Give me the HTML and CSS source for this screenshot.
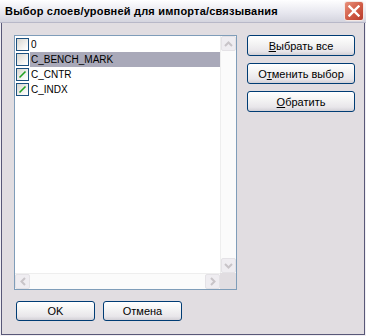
FILE: index.html
```html
<!DOCTYPE html>
<html lang="ru">
<head>
<meta charset="utf-8">
<title>Выбор слоев/уровней</title>
<link rel="stylesheet" href="styles.css">
</head>
<body>
<div class="window">
  <div class="titlebar">
    <span class="title">Выбор слоев/уровней для импорта/связывания</span>
    <span class="close"><svg width="12" height="12" viewBox="0 0 12 12"><path d="M1.5 1.5L10.5 10.5M10.5 1.5L1.5 10.5" stroke="#fff" stroke-width="2.4" stroke-linecap="square"/></svg></span>
  </div>
  <div class="body">
    <div class="main">
      <div class="listbox">
        <div class="items">
          <div class="item"><span class="cb"></span><span class="label">0</span></div>
          <div class="item selected"><span class="cb"></span><span class="label">C_BENCH_MARK</span></div>
          <div class="item"><span class="cb checked"><svg width="9" height="9" viewBox="0 0 9 9"><path d="M1.5 7.5L7.5 1.5" stroke="#21a121" stroke-width="1.6"/></svg></span><span class="label">C_CNTR</span></div>
          <div class="item"><span class="cb checked"><svg width="9" height="9" viewBox="0 0 9 9"><path d="M1.5 7.5L7.5 1.5" stroke="#21a121" stroke-width="1.6"/></svg></span><span class="label">C_INDX</span></div>
        </div>
        <div class="vscroll">
          <span class="sbtn"><svg width="9" height="6" viewBox="0 0 9 6"><path d="M1 5L4.5 1.5L8 5" fill="none" stroke="#c8c4c8" stroke-width="2"/></svg></span>
          <span class="track"></span>
          <span class="sbtn"><svg width="9" height="6" viewBox="0 0 9 6"><path d="M1 1L4.5 4.5L8 1" fill="none" stroke="#c8c4c8" stroke-width="2"/></svg></span>
        </div>
        <div class="hscroll">
          <span class="sbtn"><svg width="6" height="9" viewBox="0 0 6 9"><path d="M5 1L1.5 4.5L5 8" fill="none" stroke="#c8c4c8" stroke-width="2"/></svg></span>
          <span class="track"></span>
          <span class="sbtn"><svg width="6" height="9" viewBox="0 0 6 9"><path d="M1 1L4.5 4.5L1 8" fill="none" stroke="#c8c4c8" stroke-width="2"/></svg></span>
        </div>
        <div class="corner"></div>
      </div>
      <div class="side">
        <button class="btn wide"><u>В</u>ыбрать все</button>
        <button class="btn wide">О<u>т</u>менить выбор</button>
        <button class="btn wide"><u>О</u>братить</button>
      </div>
    </div>
    <div class="bottom">
      <button class="btn small">OK</button>
      <button class="btn small">Отмена</button>
    </div>
  </div>
</div>
</body>
</html>
```
FILE: styles.css
```css
html, body {
  margin: 0;
  padding: 0;
  background: #e1dde1;
}
.window {
  width: 366px;
  height: 336px;
  box-sizing: border-box;
  display: flex;
  flex-direction: column;
  background: #e1dde1;
  border: 1px solid #f0eef2;
  box-shadow: inset 1px 0 0 #585878, inset -1px 0 0 #585878, inset 0 -1px 0 #585878;
  font-family: "Liberation Sans", Arial, sans-serif;
  font-size: 11px;
  color: #000;
}
.titlebar {
  height: 22px;
  flex: none;
  display: flex;
  align-items: center;
  justify-content: space-between;
  padding: 0 2px 0 5px;
  background: linear-gradient(#fefeff, #e6e6ee 60%, #d4d4de);
  border-bottom: 1px solid #b8b8c8;
  margin: -1px -1px 0 -1px;
}
.title {
  font-weight: bold;
  font-size: 11px;
  letter-spacing: 0.2px;
}
.close {
  width: 20px;
  height: 20px;
  box-sizing: border-box;
  display: flex;
  align-items: center;
  justify-content: center;
  border: 1px solid #f4e8e4;
  border-radius: 3px;
  background: linear-gradient(135deg, #e8907c, #d05a44 55%, #b83c2c);
}
.body {
  flex: 1;
  display: flex;
  flex-direction: column;
  padding: 12px 10px 14px 13px;
}
.main {
  display: flex;
  gap: 10px;
  height: 255px;
}
.listbox {
  width: 223px;
  box-sizing: border-box;
  border: 1px solid #7f9db9;
  background: #fff;
  display: grid;
  grid-template-columns: 1fr 16px;
  grid-template-rows: 1fr 16px;
}
.items {
  padding: 1px 0 0 1px;
}
.item {
  height: 15px;
  display: flex;
  align-items: center;
}
.cb {
  width: 13px;
  height: 13px;
  box-sizing: border-box;
  border: 1px solid #1c5180;
  background: linear-gradient(135deg, #d8d6d0, #f6f6f4 70%, #fff);
  display: flex;
  align-items: center;
  justify-content: center;
  flex: none;
}
.label {
  margin-left: 1px;
  padding: 0 1px;
  line-height: 15px;
  font-size: 10px;
  flex: 1;
}
.selected .label {
  background: #a9a9b9;
}
.vscroll {
  display: flex;
  flex-direction: column;
  background: #fbfbfb;
  border-left: 1px solid #eeeeee;
}
.hscroll {
  display: flex;
  background: #fbfbfb;
  border-top: 1px solid #eeeeee;
}
.track {
  flex: 1;
}
.sbtn {
  width: 15px;
  height: 15px;
  box-sizing: border-box;
  border: 1px solid #e4e2e6;
  border-radius: 2px;
  background: #efedf1;
  display: flex;
  align-items: center;
  justify-content: center;
  flex: none;
}
.corner {
  background: #e1dde1;
}
.side {
  display: flex;
  flex-direction: column;
  gap: 7px;
}
.btn {
  font-family: "Liberation Sans", Arial, sans-serif;
  font-size: 11px;
  color: #000;
  height: 21px;
  box-sizing: border-box;
  border: 1px solid #003c74;
  border-radius: 3px;
  background: linear-gradient(#ffffff, #f4f4f4 40%, #e8e6ea 80%, #d2d0d6);
  padding: 0;
  margin: 0;
}
.btn.wide {
  width: 108px;
}
.bottom {
  margin-top: auto;
  display: flex;
  gap: 8px;
  padding-left: 2px;
}
.btn.small {
  width: 79px;
  height: 20px;
}
```
